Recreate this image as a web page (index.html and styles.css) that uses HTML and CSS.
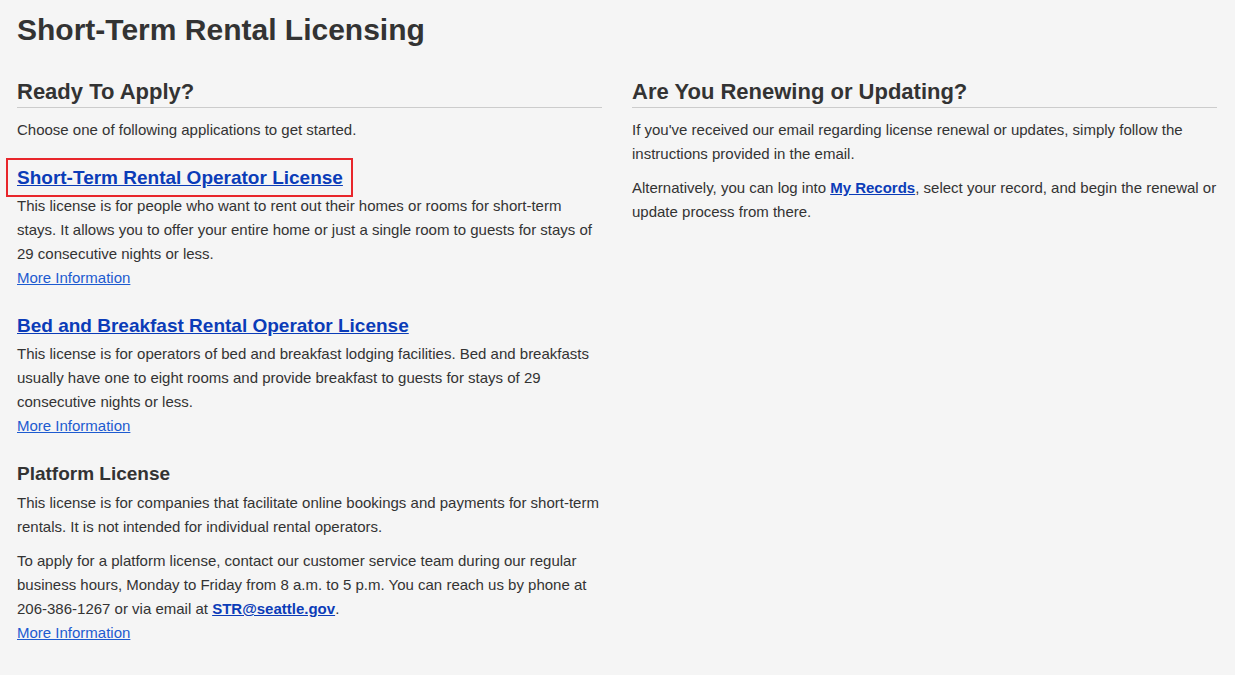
FILE: index.html
```html
<!DOCTYPE html>
<html lang="en">
<head>
    <meta charset="UTF-8">
    <meta name="viewport" content="width=device-width, initial-scale=1.0">
    <title>Short-Term Rental Licensing</title>
    <link rel="stylesheet" href="styles.css">
</head>
<body>
    <div class="page">
        <h1>Short-Term Rental Licensing</h1>

        <div class="columns">
            <div class="column">
                <h2>Ready To Apply?</h2>
                <p>Choose one of following applications to get started.</p>

                <h3 class="license-title highlighted"><a href="#">Short-Term Rental Operator License</a></h3>
                <p class="desc">This license is for people who want to rent out their homes or rooms for short-term stays. It allows you to offer your entire home or just a single room to guests for stays of 29 consecutive nights or less.</p>
                <p class="more"><a href="#">More Information</a></p>

                <h3 class="license-title"><a href="#">Bed and Breakfast Rental Operator License</a></h3>
                <p class="desc">This license is for operators of bed and breakfast lodging facilities. Bed and breakfasts usually have one to eight rooms and provide breakfast to guests for stays of 29 consecutive nights or less.</p>
                <p class="more"><a href="#">More Information</a></p>

                <h3 class="license-title plain">Platform License</h3>
                <p class="desc">This license is for companies that facilitate online bookings and payments for short-term rentals. It is not intended for individual rental operators.</p>
                <p class="desc">To apply for a platform license, contact our customer service team during our regular business hours, Monday to Friday from 8 a.m. to 5 p.m. You can reach us by phone at 206-386-1267 or via email at <a class="strong-link" href="#">STR@seattle.gov</a>.</p>
                <p class="more"><a href="#">More Information</a></p>
            </div>

            <div class="column">
                <h2>Are You Renewing or Updating?</h2>
                <p>If you've received our email regarding license renewal or updates, simply follow the instructions provided in the email.</p>
                <p>Alternatively, you can log into <a class="strong-link" href="#">My Records</a>, select your record, and begin the renewal or update process from there.</p>
            </div>
        </div>
    </div>
</body>
</html>
```

FILE: styles.css
```css
body {
    margin: 0;
    background-color: #f5f5f5;
    color: #333;
    font-family: "Liberation Sans", Arial, sans-serif;
    font-size: 15px;
    line-height: 24px;
}

.page {
    padding: 12px 17px;
}

h1 {
    margin: 0 0 30px;
    font-size: 30px;
    line-height: 36px;
    font-weight: bold;
}

.columns {
    display: grid;
    grid-template-columns: 585px 585px;
    gap: 30px;
}

h2 {
    margin: 0 0 10px;
    padding: 1px 0 2px;
    border-bottom: 1px solid #ccc;
    font-size: 22px;
    line-height: 26px;
}

p {
    margin: 0 0 10px;
}

.license-title {
    position: relative;
    margin: 19px 0 0;
    font-size: 19px;
    line-height: 33px;
}

.license-title a {
    color: #0b3cb8;
}

.license-title.plain {
    line-height: 34px;
}

/* red box drawn round the first application link */
.highlighted {
    width: fit-content;
}

.highlighted::after {
    content: "";
    position: absolute;
    left: -11px;
    right: -10px;
    top: -3px;
    bottom: -3px;
    border: 2px solid #e8262b;
}

.desc {
    margin: 0;
}

.desc + .desc {
    margin-top: 10px;
}

.more {
    margin: 0;
}

.more a {
    color: #1d5bd0;
}

.strong-link {
    color: #0b3cb8;
    font-weight: bold;
}
```
